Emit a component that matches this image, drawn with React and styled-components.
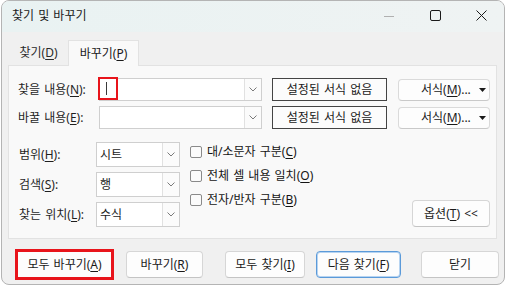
import React from "react";
import styled, { createGlobalStyle, css } from "styled-components";

const GlobalStyle = createGlobalStyle`
  html, body { margin: 0; padding: 0; background: #ffffff; }
  body {
    font-family: "Noto Sans", "Noto Sans CJK KR", sans-serif;
    font-size: 12px;
    word-spacing: 1px;
    color: #1b1b1b;
    width: 507px;
    height: 286px;
    overflow: hidden;
  }
  u { text-decoration-thickness: 1px; text-underline-offset: 2px; }
`;

const Window = styled.div`
  margin-left: 1px;
  width: 504px;
  height: 285px;
  box-sizing: border-box;
  border: 1px solid #b4b4b4;
  border-radius: 8px;
  overflow: hidden;
  background: #f0f0f0;
  display: flex;
  flex-direction: column;
`;

const TitleBar = styled.div`
  height: 31px;
  flex: none;
  display: flex;
  align-items: center;
  background: linear-gradient(90deg, #e9f2f2 0%, #eff3f3 100%);
`;

const Title = styled.div`
  padding-left: 10px;
  line-height: 16px;
  font-size: 12px;
  color: #1a1a1a;
  flex: 1;
  margin-top: -2px;
`;

const CtrlButton = styled.div`
  width: 46px;
  height: 31px;
  display: flex;
  align-items: center;
  justify-content: center;
  margin-top: -2px;
`;

const Body = styled.div`
  flex: 1;
  display: flex;
  flex-direction: column;
`;

const TabStrip = styled.div`
  display: flex;
  align-items: flex-end;
  margin: 7px 0 0 6px;
  height: 26px;
`;

const Tab = styled.div`
  box-sizing: border-box;
  width: ${(p) => p.$w}px;
  display: flex;
  align-items: center;
  justify-content: center;
  line-height: 16px;
  font-size: 12px;
  ${(p) =>
    p.$active
      ? css`
          height: 26px;
          background: #f9f9f9;
          border: 1px solid #e2e2e2;
          border-bottom: none;
          position: relative;
          z-index: 1;
          margin-bottom: -1px;
          color: #1a1a1a;
        `
      : css`
          height: 24px;
          margin-left: 1px;
          background: #f0f0f0;
          color: #2a2a2a;
        `}
`;

const Panel = styled.div`
  margin: 0 7px 0 6px;
  height: 174px;
  box-sizing: border-box;
  background: #f9f9f9;
  border: 1px solid #e2e2e2;
  padding: 12px 6px 0 9px;
  display: flex;
  flex-direction: column;
`;

const FieldRow = styled.div`
  display: flex;
  align-items: center;
  height: 23px;
  margin-top: ${(p) => p.$mt || 0}px;
`;

const Label = styled.div`
  width: ${(p) => p.$w}px;
  flex: none;
  line-height: 16px;
  color: #1f1f1f;
  white-space: nowrap;
`;

const Combo = styled.div`
  position: relative;
  box-sizing: border-box;
  width: ${(p) => p.$w}px;
  height: ${(p) => p.$h}px;
  border: 1px solid #cfcfcf;
  background: #ffffff;
  display: flex;
  flex: none;
`;

const ComboText = styled.div`
  flex: 1;
  padding-left: 3px;
  display: flex;
  align-items: center;
  line-height: 16px;
  color: #1a1a1a;
`;

const ComboArrow = styled.div`
  width: 16px;
  border-left: 1px solid #e1e1e1;
  background: #fbfbfb;
  display: flex;
  align-items: center;
  justify-content: center;
`;

const Highlight = styled.div`
  position: absolute;
  left: -2px;
  top: -2px;
  width: 20px;
  height: 23px;
  box-sizing: border-box;
  border: 2px solid #e8141b;
  display: flex;
  align-items: center;
  padding-left: 6px;
`;

const Caret = styled.div`
  width: 1px;
  height: 13px;
  background: #3a3a3a;
`;

const FormatPreview = styled.div`
  box-sizing: border-box;
  width: 115px;
  height: 23px;
  margin-left: 10px;
  border: 1px solid #444;
  background: #fcfcfc;
  display: flex;
  align-items: center;
  justify-content: center;
  line-height: 16px;
  color: #1a1a1a;
`;

const SplitButton = styled.div`
  box-sizing: border-box;
  width: 92px;
  height: 22px;
  margin-left: 11px;
  border: 1px solid #dadada;
  border-bottom-color: #c9c9c9;
  border-radius: 4px;
  background: #fdfdfd;
  display: flex;
  align-items: center;
  padding-left: 22px;
  line-height: 16px;
  color: #1a1a1a;
`;

const SplitArrow = styled.span`
  margin-left: auto;
  margin-right: 3px;
  display: flex;
`;

const Options = styled.div`
  display: flex;
  margin-top: 11px;
`;

const SelectColumn = styled.div`
  display: flex;
  flex-direction: column;
  gap: 5px;
  padding-top: 2px;
`;

const SelectRow = styled.div`
  display: flex;
  align-items: center;
  padding-left: 1px;
`;

const CheckList = styled.div`
  margin-left: 10px;
  display: flex;
  flex-direction: column;
`;

const CheckRow = styled.div`
  height: 24px;
  display: flex;
  align-items: center;
  line-height: 16px;
  color: #141414;
`;

const Box = styled.div`
  width: 12px;
  height: 12px;
  box-sizing: border-box;
  border: 1px solid #8a8a8a;
  border-radius: 2px;
  background: #fbfbfb;
  margin-right: 5px;
`;

const Button = styled.div`
  box-sizing: border-box;
  width: ${(p) => p.$w}px;
  height: ${(p) => p.$h || 27}px;
  margin-left: ${(p) => p.$ml || 0}px;
  border: 1px solid #d6d6d6;
  border-bottom-color: #c4c4c4;
  border-radius: 4px;
  background: #fdfdfd;
  display: flex;
  align-items: center;
  justify-content: center;
  line-height: 16px;
  color: #1a1a1a;
  flex: none;
  ${(p) =>
    p.$marked &&
    css`
      border-radius: 0;
      outline: 2px solid #e8141b;
      border-color: #e8141b;
    `}
  ${(p) =>
    p.$default &&
    css`
      border-color: #5b9ad9;
      box-shadow: inset 0 0 0 1px #b7d4f1;
    `}
`;

const OptionsButton = styled(Button)`
  margin-left: auto;
  align-self: flex-end;
`;

const ButtonBar = styled.div`
  display: flex;
  margin-top: 12px;
  padding-left: 15px;
`;

const Chevron = () => (
  <svg width="8" height="5" viewBox="0 0 8 5">
    <polyline points="0.5,0.5 4,4 7.5,0.5" fill="none" stroke="#7a7a7a" strokeWidth="1" />
  </svg>
);

const DropTriangle = () => (
  <SplitArrow>
    <svg width="7" height="4" viewBox="0 0 7 4">
      <polygon points="0,0 7,0 3.5,4" fill="#1a1a1a" />
    </svg>
  </SplitArrow>
);

const FieldCombo = ({ w, h, children, highlight }) => (
  <Combo $w={w} $h={h}>
    <ComboText>{children}</ComboText>
    <ComboArrow>
      <Chevron />
    </ComboArrow>
    {highlight && (
      <Highlight>
        <Caret />
      </Highlight>
    )}
  </Combo>
);

export default function App() {
  return (
    <>
      <GlobalStyle />
      <Window>
        <TitleBar>
          <Title>찾기 및 바꾸기</Title>
          <CtrlButton>
            <svg width="10" height="10" viewBox="0 0 10 10">
              <line x1="0" y1="5.5" x2="10" y2="5.5" stroke="#b0b0b0" strokeWidth="1" />
            </svg>
          </CtrlButton>
          <CtrlButton>
            <svg width="11" height="11" viewBox="0 0 11 11">
              <rect x="0.5" y="0.5" width="10" height="10" rx="1.5" fill="none" stroke="#1a1a1a" strokeWidth="1" />
            </svg>
          </CtrlButton>
          <CtrlButton>
            <svg width="11" height="11" viewBox="0 0 11 11">
              <path d="M0.5 0.5 L10.5 10.5 M10.5 0.5 L0.5 10.5" stroke="#1a1a1a" strokeWidth="1" />
            </svg>
          </CtrlButton>
        </TitleBar>
        <Body>
          <TabStrip>
            <Tab $w={59}>
              찾기(<u>D</u>)
            </Tab>
            <Tab $w={71} $active>
              바꾸기(<u>P</u>)
            </Tab>
          </TabStrip>
          <Panel>
            <FieldRow>
              <Label $w={81}>
                찾을 내용(<u>N</u>):
              </Label>
              <FieldCombo w={163} h={23} highlight />
              <FormatPreview>설정된 서식 없음</FormatPreview>
              <SplitButton>
                서식(<u>M</u>)...
                <DropTriangle />
              </SplitButton>
            </FieldRow>
            <FieldRow $mt={5}>
              <Label $w={81}>
                바꿀 내용(<u>E</u>):
              </Label>
              <FieldCombo w={163} h={23} />
              <FormatPreview>설정된 서식 없음</FormatPreview>
              <SplitButton>
                서식(<u>M</u>)...
                <DropTriangle />
              </SplitButton>
            </FieldRow>
            <Options>
              <SelectColumn>
                <SelectRow>
                  <Label $w={77}>
                    범위(<u>H</u>):
                  </Label>
                  <FieldCombo w={84} h={25}>시트</FieldCombo>
                </SelectRow>
                <SelectRow>
                  <Label $w={77}>
                    검색(<u>S</u>):
                  </Label>
                  <FieldCombo w={84} h={25}>행</FieldCombo>
                </SelectRow>
                <SelectRow>
                  <Label $w={77}>
                    찾는 위치(<u>L</u>):
                  </Label>
                  <FieldCombo w={84} h={25}>수식</FieldCombo>
                </SelectRow>
              </SelectColumn>
              <CheckList>
                <CheckRow>
                  <Box />
                  대/소문자 구분(<u>C</u>)
                </CheckRow>
                <CheckRow>
                  <Box />
                  전체 셀 내용 일치(<u>O</u>)
                </CheckRow>
                <CheckRow>
                  <Box />
                  전자/반자 구분(<u>B</u>)
                </CheckRow>
              </CheckList>
              <OptionsButton $w={78}>
                옵션(<u>T</u>)&nbsp;&lt;&lt;
              </OptionsButton>
            </Options>
          </Panel>
          <ButtonBar>
            <Button $w={95} $marked>
              모두 바꾸기(<u>A</u>)
            </Button>
            <Button $w={77} $ml={14}>
              바꾸기(<u>R</u>)
            </Button>
            <Button $w={80} $ml={22}>
              모두 찾기(<u>I</u>)
            </Button>
            <Button $w={85} $ml={11} $default>
              다음 찾기(<u>F</u>)
            </Button>
            <Button $w={78} $ml={20}>
              닫기
            </Button>
          </ButtonBar>
        </Body>
      </Window>
    </>
  );
}
